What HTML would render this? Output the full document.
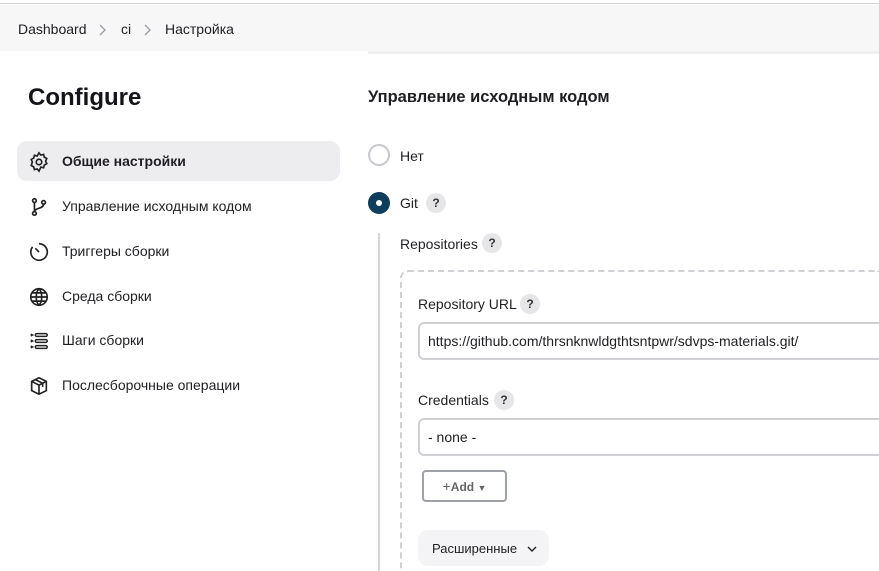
<!DOCTYPE html>
<html><head><meta charset="utf-8"><style>
*{box-sizing:border-box;margin:0;padding:0}
html{width:879px;height:571px;overflow:hidden}
body{width:879px;height:571px;overflow:hidden;background:#fff;font-family:"Liberation Sans","DejaVu Sans",sans-serif;color:#1f1f23;position:relative;font-size:14px}
.top{position:absolute;left:0;top:0;width:879px;height:4px;background:#fff;border-bottom:1px solid #d4d4d8}
.bc{position:absolute;left:0;top:5px;width:879px;height:46px;background:#f7f7f8}
.bc span{position:absolute;top:16px;font-size:14px}
.bc svg{position:absolute;top:19px}
.line2{position:absolute;left:368px;top:51px;width:511px;height:3px;background:#f0f0f2}
h1{position:absolute;left:28px;top:84px;font-size:24px;font-weight:bold;color:#14141a}
.item{position:absolute;left:17px;width:323px;height:40px;border-radius:10px}
.item svg{position:absolute;left:11px;top:10px}
.item span{position:absolute;left:45px;top:12px;font-size:14px}
.sel{background:#ededf0;font-weight:bold}
h2{position:absolute;left:368px;top:88px;font-size:16.5px;font-weight:bold}
.radio{position:absolute;left:368px;width:22px;height:22px;border-radius:50%}
.q{position:absolute;width:20px;height:20px;border-radius:50%;background:#e6e6e9;font-size:12px;font-weight:bold;text-align:center;line-height:20px;color:#333}
.lbl{position:absolute;font-size:14px}
.inp{position:absolute;left:418px;width:461px;height:38px;border:2px solid #cfd0d4;border-right:none;border-radius:6px 0 0 6px;font-size:14px;padding:9px 8px}
</style></head><body>
<div class="top"></div>
<div class="bc">
<span style="left:18px">Dashboard</span><svg style="left:98px" width="8" height="12" viewBox="0 0 8 12" fill="none" stroke="#9a9aa2" stroke-width="1.3"><path d="M2 1l5 5-5 5"/></svg>
<span style="left:121px">ci</span><svg style="left:143px" width="8" height="12" viewBox="0 0 8 12" fill="none" stroke="#9a9aa2" stroke-width="1.3"><path d="M2 1l5 5-5 5"/></svg>
<span style="left:165px">Настройка</span>
</div>
<div class="line2"></div>
<h1>Configure</h1>

<div class="item sel" style="top:141px"><svg width="22" height="22" viewBox="0 0 24 24" fill="none" stroke="#222" stroke-width="1.8"><circle cx="12" cy="12" r="3"/><path d="M12 2l2 2.5 3-.8.8 3 2.7 1.5-1.3 2.8 1.3 2.8-2.7 1.5-.8 3-3-.8L12 22l-2-2.5-3 .8-.8-3-2.7-1.5L4.8 12 3.5 9.2l2.7-1.5.8-3 3 .8z"/></svg><span>Общие настройки</span></div>
<div class="item" style="top:186px"><svg width="22" height="22" viewBox="0 0 24 24" fill="none" stroke="#222" stroke-width="1.8"><circle cx="7" cy="5" r="2"/><circle cx="7" cy="19" r="2"/><circle cx="17" cy="7" r="2"/><path d="M7 7v10M17 9c0 5-10 4-10 8"/></svg><span>Управление исходным кодом</span></div>
<div class="item" style="top:231px"><svg width="22" height="22" viewBox="0 0 24 24" fill="none" stroke="#222" stroke-width="1.8"><path d="M12 3a9 9 0 1 1-7 3.4"/><path d="M8 8l4 4"/></svg><span>Триггеры сборки</span></div>
<div class="item" style="top:276px"><svg width="22" height="22" viewBox="0 0 24 24" fill="none" stroke="#222" stroke-width="1.8"><circle cx="12" cy="12" r="9"/><path d="M3 12h18M12 3c-4 4-4 14 0 18M12 3c4 4 4 14 0 18M4.5 7.5h15M4.5 16.5h15"/></svg><span>Среда сборки</span></div>
<div class="item" style="top:320px"><svg width="22" height="22" viewBox="0 0 24 24" fill="none" stroke="#222" stroke-width="1.6"><rect x="8" y="4" width="13" height="3" rx="1.5"/><rect x="8" y="10.5" width="13" height="3" rx="1.5"/><rect x="8" y="17" width="13" height="3" rx="1.5"/><path d="M3 4.5l2 1-2 1M3 11l2 1-2 1M3 17.5l2 1-2 1"/></svg><span>Шаги сборки</span></div>
<div class="item" style="top:365px"><svg width="22" height="22" viewBox="0 0 24 24" fill="none" stroke="#222" stroke-width="1.8"><path d="M12 3l8 4v10l-8 4-8-4V7z"/><path d="M4 7l8 4 8-4M12 11v10M8 5l8 4v4"/></svg><span>Послесборочные операции</span></div>

<h2>Управление исходным кодом</h2>
<div class="radio" style="top:144px;border:2px solid #c6c8cc"></div>
<div class="lbl" style="left:400px;top:148px">Нет</div>
<div class="radio" style="top:192px;background:#0f3d5c"><div style="position:absolute;left:8px;top:8px;width:6px;height:6px;border-radius:50%;background:#fff"></div></div>
<div class="lbl" style="left:400px;top:195px">Git</div>
<div class="q" style="left:426px;top:193px">?</div>

<div style="position:absolute;left:378px;top:233px;width:2px;height:338px;background:#d4d5d8"></div>
<div class="lbl" style="left:400px;top:236px">Repositories</div>
<div class="q" style="left:482px;top:233px">?</div>
<div style="position:absolute;left:400px;top:270px;width:479px;height:301px;border:2px dashed #cfd0d4;border-bottom:none;border-right:none;border-radius:8px 0 0 0"></div>
<div class="lbl" style="left:418px;top:296px">Repository URL</div>
<div class="q" style="left:520px;top:294px">?</div>
<div class="inp" style="top:322px">https://github.com/thrsnknwldgthtsntpwr/sdvps-materials.git/</div>
<div class="lbl" style="left:418px;top:392px">Credentials</div>
<div class="q" style="left:494px;top:390px">?</div>
<div class="inp" style="top:418px">- none -</div>
<div style="position:absolute;left:422px;top:470px;width:85px;height:32px;border:2px solid #9ea2a8;border-radius:4px;font-size:12px;font-weight:bold;color:#666;text-align:center;line-height:28px"><span style="font-weight:normal;font-size:14px">+</span>Add <span style="font-size:9px">▼</span></div>
<div style="position:absolute;left:418px;top:530px;width:131px;height:36px;background:#f4f4f6;border-radius:10px;font-size:13px;padding:11px 0 0 14px">Расширенные <svg style="margin-left:6px" width="10" height="8" viewBox="0 0 10 8" fill="none" stroke="#222" stroke-width="1.4"><path d="M1 2l4 4 4-4"/></svg></div>
</body></html>
